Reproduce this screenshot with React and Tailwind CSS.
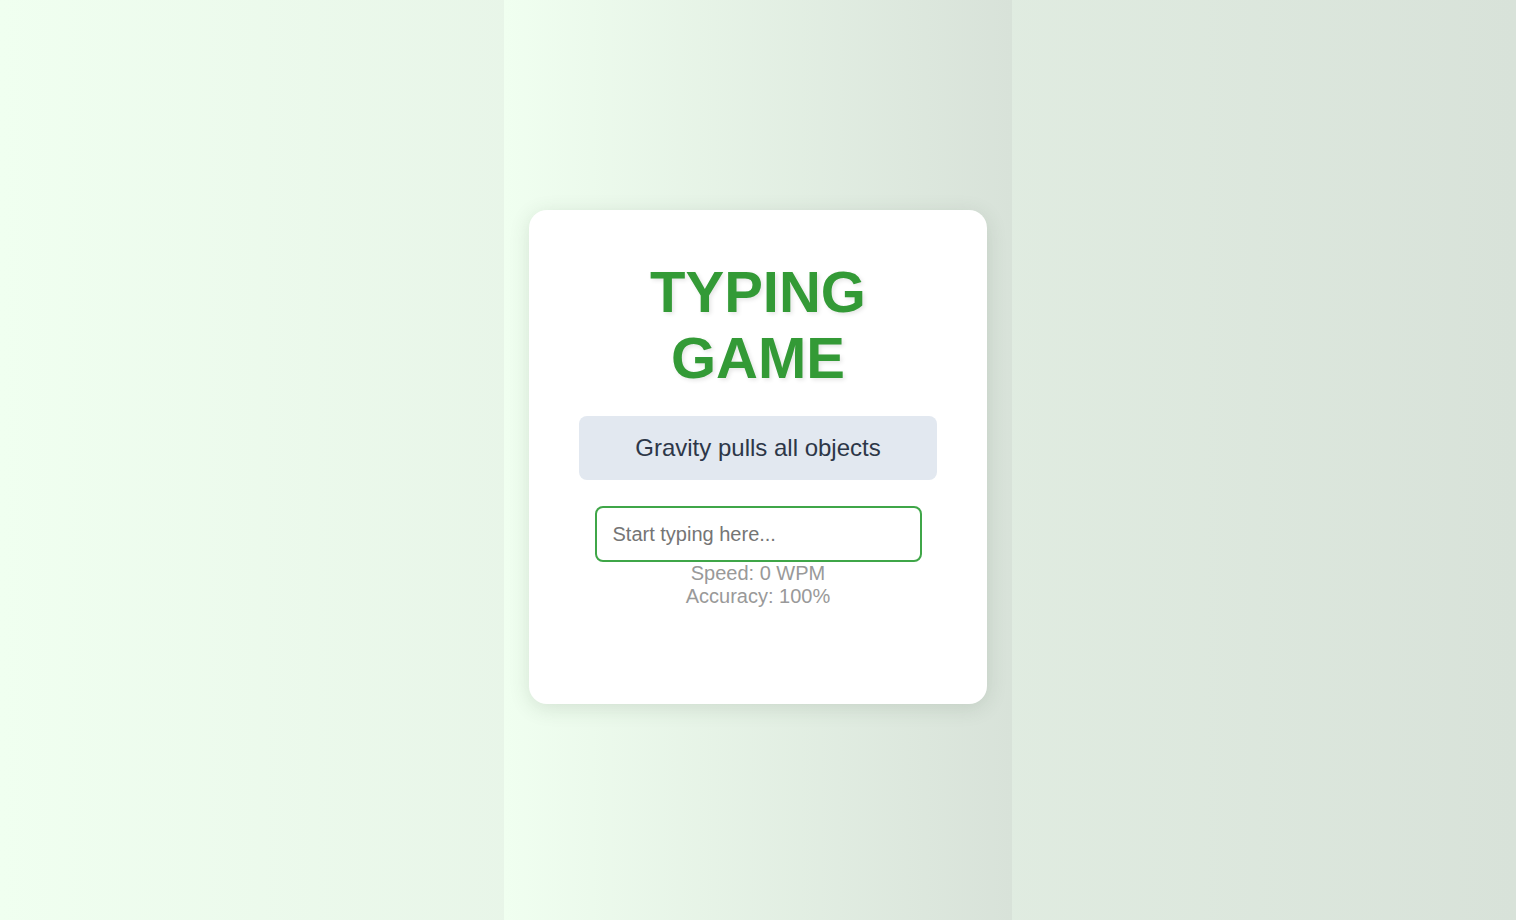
import { useState } from "react";

export default function App() {
  const [value, setValue] = useState("");

  return (
    <div className="min-h-screen w-full flex justify-center bg-[linear-gradient(to_right,#f0fff0,#d8e2d9)] font-['Liberation_Sans',Arial,sans-serif]">
      <div className="w-[508px] h-screen pb-[6px] flex items-center justify-center bg-[linear-gradient(to_right,#f0fff0,#d8e2d9)]">
        <div className="w-[458px] bg-white rounded-[18px] shadow-[0_4px_20px_rgba(60,80,60,0.15)] px-[50px] pt-[49px] pb-[96px] flex flex-col items-center">
          <h1 className="text-[58px] leading-[66px] font-bold text-[#339a36] text-center [text-shadow:2px_2px_4px_rgba(0,0,0,0.1)]">
            TYPING GAME
          </h1>

          <div className="mt-[25px] w-full h-16 rounded-lg bg-[#e2e8f0] flex items-center justify-center text-2xl text-[#2d3748]">
            Gravity pulls all objects
          </div>

          <input
            autoFocus
            value={value}
            onChange={(e) => setValue(e.target.value)}
            placeholder="Start typing here..."
            className="mt-[26px] w-[327px] h-14 px-4 rounded-lg border-2 border-[#3fa648] outline-none text-xl text-[#2d3748] placeholder:text-[#757575]"
          />

          <div className="text-xl leading-[23px] text-[#999999] text-center">
            <div>Speed: 0 WPM</div>
            <div>Accuracy: 100%</div>
          </div>
        </div>
      </div>
    </div>
  );
}
